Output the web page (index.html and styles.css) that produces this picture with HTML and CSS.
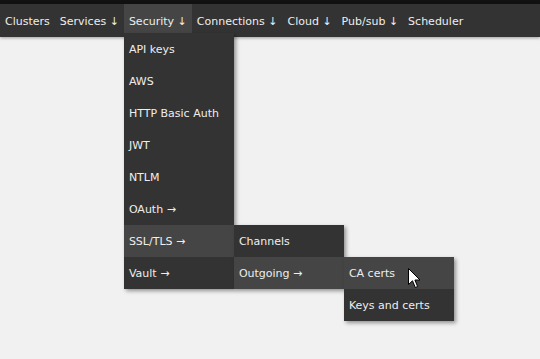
FILE: index.html
```html
<!DOCTYPE html>
<html>
<head>
<meta charset="utf-8">
<link rel="stylesheet" href="styles.css">
</head>
<body>
<div class="topline"></div>
<nav class="bar">
  <ul class="menu">
    <li class="item"><span class="label">Clusters</span></li>
    <li class="item"><span class="label">Services ↓</span></li>
    <li class="item active"><span class="label">Security ↓</span>
      <ul class="drop">
        <li class="ditem">API keys</li>
        <li class="ditem">AWS</li>
        <li class="ditem">HTTP Basic Auth</li>
        <li class="ditem">JWT</li>
        <li class="ditem">NTLM</li>
        <li class="ditem">OAuth →</li>
        <li class="ditem active">SSL/TLS →
          <ul class="drop sub">
            <li class="ditem">Channels</li>
            <li class="ditem active">Outgoing →
              <ul class="drop sub">
                <li class="ditem active">CA certs</li>
                <li class="ditem">Keys and certs</li>
              </ul>
            </li>
          </ul>
        </li>
        <li class="ditem">Vault →</li>
      </ul>
    </li>
    <li class="item"><span class="label">Connections ↓</span></li>
    <li class="item"><span class="label">Cloud ↓</span></li>
    <li class="item"><span class="label">Pub/sub ↓</span></li>
    <li class="item"><span class="label">Scheduler</span></li>
  </ul>
</nav>
<svg class="cursor" width="13" height="21" viewBox="0 0 13 21">
  <path d="M0.5 0.5 L0.5 16.5 L4.5 12.8 L7.3 19.5 L9.6 18.5 L6.9 12 L12 12 Z" fill="#ffffff" stroke="#000000" stroke-width="1" stroke-linejoin="miter"/>
</svg>
</body>
</html>
```
FILE: styles.css
```css
html, body {
  margin: 0;
  padding: 0;
}
body {
  background: #f1f1f1;
  font-family: "DejaVu Sans", sans-serif;
  font-size: 11px;
  color: #eeeeee;
  width: 540px;
  height: 359px;
  overflow: hidden;
  position: relative;
}
.topline {
  height: 4px;
  background: #121212;
}
.bar {
  height: 33px;
  background: #333333;
  box-shadow: 0 1px 3px rgba(0, 0, 0, 0.35);
}
.menu {
  list-style: none;
  margin: 0;
  padding: 0;
  display: flex;
}
.item {
  position: relative;
  height: 29px;
  line-height: 35px;
  padding: 0 5px;
  white-space: nowrap;
}
.item.active {
  background: #454545;
}
.drop {
  list-style: none;
  margin: 0;
  padding: 0;
  position: absolute;
  top: 29px;
  left: 0;
  width: 110px;
  background: #333333;
  box-shadow: 2px 2px 4px rgba(0, 0, 0, 0.4);
  z-index: 2;
  line-height: 34px;
}
.drop.sub {
  top: 0;
  left: 110px;
}
.ditem {
  position: relative;
  height: 32px;
  padding: 0 5px;
  white-space: nowrap;
}
.ditem.active {
  background: #454545;
}
.cursor {
  position: absolute;
  left: 408px;
  top: 268px;
  z-index: 10;
}
```
